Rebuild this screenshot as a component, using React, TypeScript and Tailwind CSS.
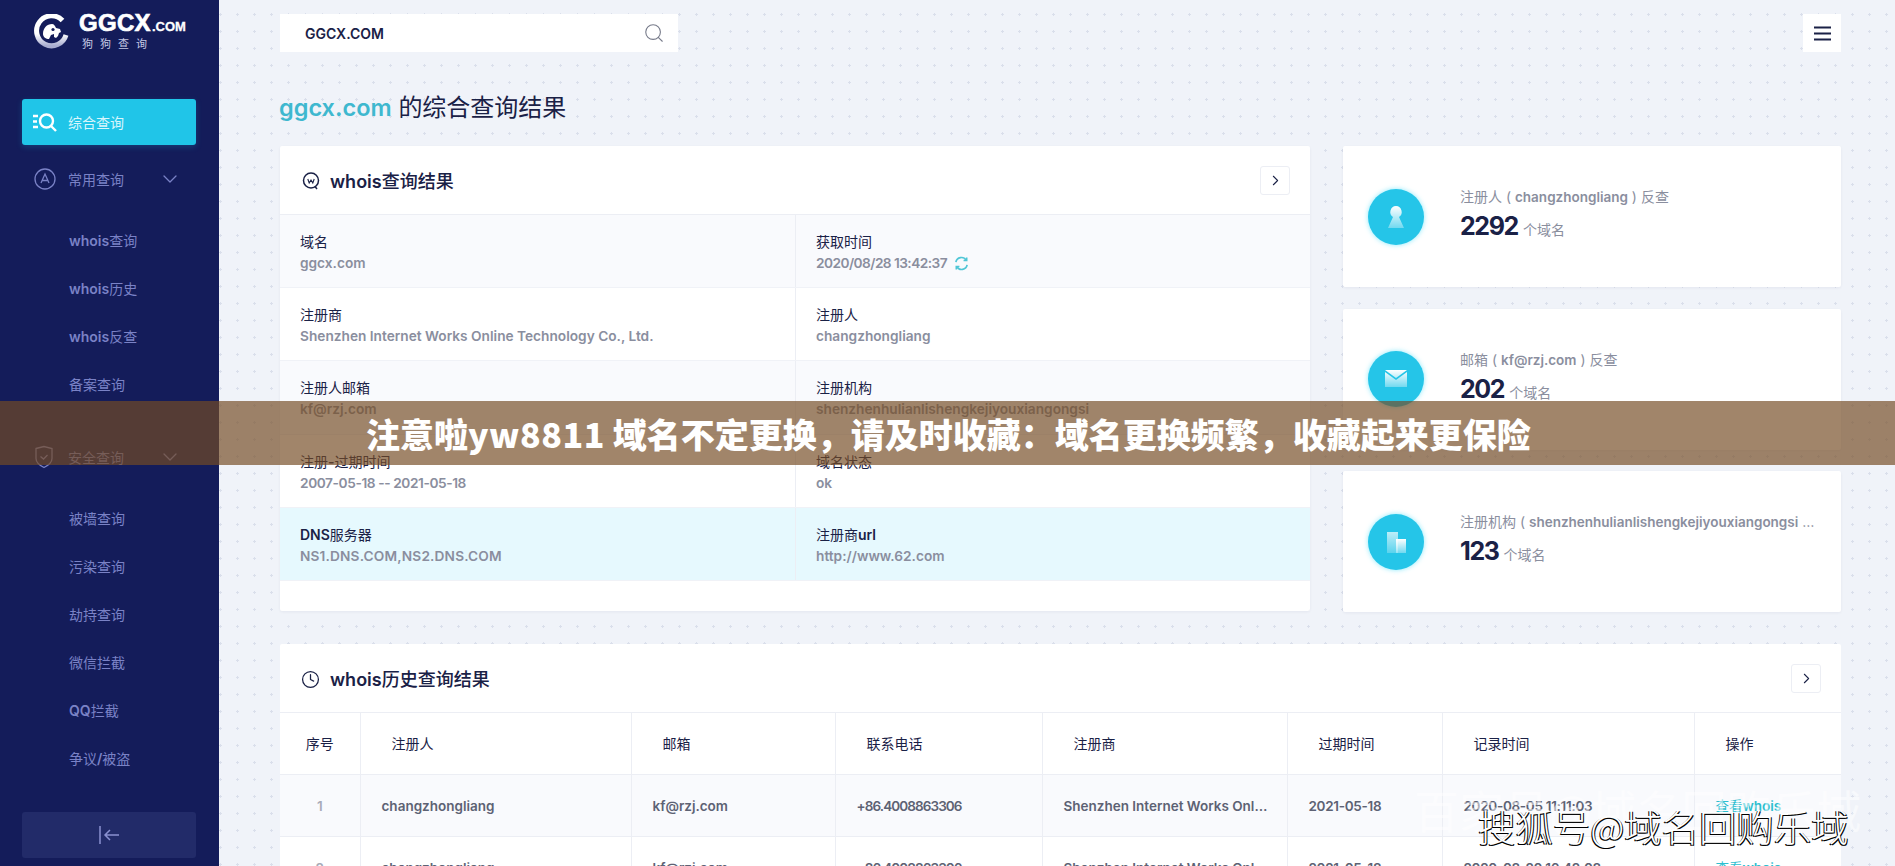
import { ChevronDown, ChevronRight, Clock, Search } from "lucide-react";

const font = "font-['Inter','Noto_Sans_CJK_SC',sans-serif]";

const navGroups = {
  common: ["whois查询", "whois历史", "whois反查", "备案查询"],
  security: ["被墙查询", "污染查询", "劫持查询", "微信拦截", "QQ拦截", "争议/被盗"],
};

const whoisRows = [
  {
    tone: "bg-[#f9fafd]",
    left: { label: "域名", value: "ggcx.com" },
    right: { label: "获取时间", value: "2020/08/28 13:42:37", tight: "tracking-[-0.55px]" },
  },
  {
    tone: "bg-white",
    left: { label: "注册商", value: "Shenzhen Internet Works Online Technology Co., Ltd." },
    right: { label: "注册人", value: "changzhongliang" },
  },
  {
    tone: "bg-[#f9fafd]",
    left: { label: "注册人邮箱", value: "kf@rzj.com" },
    right: { label: "注册机构", value: "shenzhenhulianlishengkejiyouxiangongsi" },
  },
  {
    tone: "bg-white",
    left: { label: "注册-过期时间", value: "2007-05-18 -- 2021-05-18", tight: "tracking-[-0.4px]" },
    right: { label: "域名状态", value: "ok" },
  },
  {
    tone: "bg-[#e6f9fe]",
    left: { label: "DNS服务器", value: "NS1.DNS.COM,NS2.DNS.COM", tight: "tracking-[0.15px]" },
    right: { label: "注册商url", value: "http://www.62.com" },
  },
];

const history = [
  { id: 1, time: "2020-08-05 11:11:03", tone: "bg-[#f9fafd]" },
  { id: 2, time: "2020-08-20 16:42:08", tone: "bg-white" },
];

// latin runs are bold on the original site, the chinese runs are not
function Mixed({ text, weight = "font-semibold" }: { text: string; weight?: string }) {
  return (
    <>
      {text.split(/([\x00-\x7f]+)/).map((part, i) =>
        i % 2 === 1 ? (
          <span key={i} className={weight}>
            {part}
          </span>
        ) : (
          part
        ),
      )}
    </>
  );
}

function Logo() {
  return (
    <div className="flex items-center pl-[33px] pt-[14px]">
      <svg width="36" height="36" viewBox="0 0 36 36" fill="none">
        <defs>
          <linearGradient id="logo-fill" x1="0" y1="0" x2="0" y2="1">
            <stop offset="0.6" stopColor="#ffffff" />
            <stop offset="1" stopColor="#a9add0" />
          </linearGradient>
        </defs>
        <path d="M29.500 6.500A15 15 0 1 0 33 21" stroke="url(#logo-fill)" strokeWidth="5" />
        <path
          d="M10 20c0-6 4-10 9-10 2 0 3 2 4 4l4 1 1 3-2 1-1 3-2 2-2-1v-3l-3 1-2 4c-3 0-6-2-6-5Z"
          fill="#ffffff"
        />
        <circle cx="20" cy="15.500" r="1.600" fill="#141c5a" />
      </svg>
      <div className="ml-[10px] mt-[-3px]">
        <div className="flex items-baseline font-['Liberation_Sans',sans-serif] font-bold leading-none text-white">
          <span className="text-[24px] tracking-[0.3px] [-webkit-text-stroke:0.7px_white]">GGCX</span>
          <span className="ml-[1px] text-[13px] [-webkit-text-stroke:0.3px_white]">.COM</span>
        </div>
        <div className={`mt-[3px] pl-[3px] text-[11px] leading-[12px] tracking-[7px] text-[#c5c9e4] ${font}`}>狗狗查询</div>
      </div>
    </div>
  );
}

function SubNav({ items }: { items: string[] }) {
  return (
    <div className="flex flex-col">
      {items.map((item) => (
        <div key={item} className="flex h-[48px] items-center whitespace-pre pl-[69px] text-[14px] text-[#7a82c6]">
          <span>
            <Mixed text={item} />
          </span>
        </div>
      ))}
    </div>
  );
}

function NavGroup({ label, icon }: { label: string; icon: React.ReactNode }) {
  return (
    <div className="flex h-[46px] items-center pl-[34px] pr-[37px] text-[14px] text-[#7a82c6]">
      <span className="flex w-[34px] shrink-0 items-center">{icon}</span>
      <span className="flex-1">{label}</span>
      <ChevronDown size={24} strokeWidth={1.300} />
    </div>
  );
}

function Sidebar() {
  return (
    <aside className={`relative flex w-[219px] shrink-0 flex-col overflow-hidden bg-[#141c5a] ${font}`}>
      <Logo />
      <div className="ml-[22px] mr-[23px] mt-[49px] flex h-[46px] items-center rounded-[3px] bg-[#20c5e8] pl-[11px] text-[14px] text-[#d9f6fc] shadow-[0_2px_6px_rgba(32,197,232,0.2)]">
        <svg width="25" height="20" viewBox="0 0 25 20" fill="none" stroke="white" strokeWidth="2.400" className="mr-[10px]">
          <path d="M0 4h5M0 9.500h4M0 15h5" />
          <circle cx="13.500" cy="9" r="6.500" />
          <path d="M18 14l5 5" />
        </svg>
        综合查询
      </div>
      <div className="mt-[11px]">
        <NavGroup
          label="常用查询"
          icon={
            <svg width="22" height="22" viewBox="0 0 22 22" fill="none" stroke="currentColor" strokeWidth="1.300">
              <circle cx="11" cy="11" r="10" />
              <path d="M7 15l4-9 4 9M8.500 12.500h5" />
            </svg>
          }
        />
      </div>
      <div className="mt-[14px]">
        <SubNav items={navGroups.common} />
      </div>
      <div className="mt-[26px]">
        <NavGroup
          label="安全查询"
          icon={
            <svg width="20" height="24" viewBox="0 0 20 24" fill="none" stroke="currentColor" strokeWidth="1.300">
              <path d="M2 3.500 10 1.500l8 2v10c0 4-4 7-8 9-4-2-8-5-8-9Z" />
              <path d="M6.500 11.500 9.500 14l4-4" />
            </svg>
          }
        />
      </div>
      <div className="mt-[14px]">
        <SubNav items={navGroups.security} />
      </div>
      <div className="ml-[22px] mr-[23px] mt-[30px] flex h-[46px] items-center justify-center rounded-[3px] bg-[#222b69] text-[#8a91d0]">
        <svg width="21" height="20" viewBox="0 0 21 20" fill="none" stroke="currentColor" strokeWidth="1.500">
          <path d="M1 1v18M20 10H6M11 5l-5 5 5 5" />
        </svg>
      </div>
    </aside>
  );
}

function CornerButton() {
  return (
    <button className="flex h-[29px] w-[30px] items-center justify-center rounded-[3px] border border-[#eceef4] bg-white text-[#1a2146]">
      <ChevronRight size={17} strokeWidth={1.500} />
    </button>
  );
}

function CardHeader({ icon, title }: { icon: React.ReactNode; title: string }) {
  return (
    <div className="flex h-[69px] items-center justify-between border-b border-[#eceef4] pl-[21px] pr-[20px]">
      <div className="flex items-center pt-[2px] text-[18px] font-medium text-[#1a2146]">
        <span className="mr-[10px] flex w-[19px] justify-center">{icon}</span>
        <span>
          <Mixed text={title} />
        </span>
      </div>
      <CornerButton />
    </div>
  );
}

function WhoisCell({
  label,
  value,
  tight,
  refresh,
}: {
  label: string;
  value: string;
  tight?: string;
  refresh?: boolean;
}) {
  return (
    <div className="flex-1 border-r border-[#eceef4] pl-[20px] pt-[17px] first:w-[516px] first:flex-none last:border-r-0">
      <div className="text-[14px] leading-[20px] text-[#1a2146]">
        <Mixed text={label} />
      </div>
      <div className={`mt-[1px] flex items-center text-[13.700px] font-semibold leading-[20px] text-[#8a8e9e] ${tight ?? ""}`}>
        {value}
        {refresh && (
          <svg width="15" height="15" viewBox="0 0 16 16" fill="none" stroke="#4fc6d6" strokeWidth="1.800" className="ml-[7px]">
            <path d="M2 6.500A6 6 0 0 1 13 4.500M14 9.500A6 6 0 0 1 3 11.500" />
            <path d="M13.500 1.500v3.300h-3.300M2.500 14.500v-3.300h3.300" />
          </svg>
        )}
      </div>
    </div>
  );
}

function WhoisCard() {
  return (
    <section className="h-[465px] w-[1030px] shrink-0 rounded-[2px] bg-white shadow-[0_1px_3px_rgba(30,40,90,0.06)]">
      <CardHeader
        title="whois查询结果"
        icon={
          <svg width="18" height="18" viewBox="0 0 18 18" fill="none" stroke="#1a2146" strokeWidth="1.500">
            <circle cx="9" cy="8.500" r="7.500" />
            <path d="M13 14.500l2 2.500" />
            <path d="M5.800 7l1.400 4 1.800-3 1.800 3 1.400-4" strokeWidth="1.100" />
          </svg>
        }
      />
      {whoisRows.map((row, i) => (
        <div key={row.left.label} className={`flex h-[73.200px] border-b border-[#f0f2f7] ${row.tone}`}>
          <WhoisCell {...row.left} />
          <WhoisCell {...row.right} refresh={i === 0} />
        </div>
      ))}
    </section>
  );
}

function StatCard({
  icon,
  label,
  name,
  count,
}: {
  icon: React.ReactNode;
  label: string;
  name: string;
  count: string;
}) {
  return (
    <div className="flex h-[141px] items-center rounded-[2px] bg-white pl-[25px] pr-[25px] shadow-[0_1px_3px_rgba(30,40,90,0.06)]">
      <div className="flex h-[56px] w-[56px] shrink-0 items-center justify-center rounded-full bg-[#25c5e8] shadow-[0_0_5px_rgba(60,220,250,0.6)]">
        {icon}
      </div>
      <div className="ml-[36px] min-w-0 flex-1 pb-[4px]">
        <div className="truncate text-[14px] leading-[20px] text-[#8a8e9e]">
          {label} ( <span className="text-[13.500px] font-semibold">{name}</span> ) 反查
        </div>
        <div className="mt-[3px] flex items-baseline text-[#8a8e9e]">
          <span className="text-[25px] font-bold leading-[32px] tracking-[-1.400px] text-[#1a2146]">{count}</span>
          <span className="ml-[5px] text-[14px]">个域名</span>
        </div>
      </div>
    </div>
  );
}

function StatIcon({ kind }: { kind: "user" | "mail" | "org" }) {
  const id = `stat-${kind}`;
  return (
    <svg width="24" height="28" viewBox="0 0 24 28">
      <defs>
        <linearGradient id={id} x1="0" y1="0" x2="0" y2="1">
          <stop offset="0" stopColor="#ffffff" />
          <stop offset="1" stopColor="#ffffff" stopOpacity="0.35" />
        </linearGradient>
      </defs>
      {kind === "user" && (
        <path d="M12 3a6 6 0 0 1 3 11l5 11H4l5-11a6 6 0 0 1 3-11Z" fill={`url(#${id})`} />
      )}
      {kind === "mail" && <path d="M1 7l11 8 11-8v15H1ZM1 5h22l-11 8Z" fill={`url(#${id})`} />}
      {kind === "org" && (
        <>
          <rect x="3" y="4" width="11" height="21" fill={`url(#${id})`} opacity="0.7" />
          <rect x="12" y="11" width="10" height="14" fill={`url(#${id})`} />
        </>
      )}
    </svg>
  );
}

const columns = [
  { name: "序号", width: "w-[80px]" },
  { name: "注册人", width: "w-[271px]" },
  { name: "邮箱", width: "w-[204px]" },
  { name: "联系电话", width: "w-[207px]" },
  { name: "注册商", width: "w-[245px]" },
  { name: "过期时间", width: "w-[155px]" },
  { name: "记录时间", width: "w-[252px]" },
  { name: "操作", width: "w-[147px]" },
];

function HistoryCard() {
  const td = "border-r border-[#eceef4] pl-[21px] pr-[17px] pt-[2px] last:border-r-0";
  return (
    <section className="mt-[32px] rounded-[2px] bg-white">
      <CardHeader title="whois历史查询结果" icon={<Clock size={19} strokeWidth={1.600} color="#1a2146" />} />
      <table className="w-full table-fixed border-collapse text-[13.500px]">
        <thead>
          <tr className="h-[61px] border-b border-[#eceef4]">
            {columns.map((col, i) => (
              <th
                key={col.name}
                className={`border-r border-[#eceef4] text-[14px] font-normal text-[#1a2146] last:border-r-0 ${col.width} ${i === 0 ? "text-center" : "pl-[31px] text-left"}`}
              >
                {col.name}
              </th>
            ))}
          </tr>
        </thead>
        <tbody>
          {history.map((row) => (
            <tr key={row.id} className={`h-[62px] border-b border-[#eceef4] font-semibold text-[#5d6274] ${row.tone}`}>
              <td className="border-r border-[#eceef4] pt-[2px] text-center text-[#a8abb8]">{row.id}</td>
              <td className={td}>changzhongliang</td>
              <td className={td}>kf@rzj.com</td>
              <td className={`${td} tracking-[-0.9px]`}>+86.4008863306</td>
              <td className={`${td} truncate`}>Shenzhen Internet Works Online Technology Co., Ltd.</td>
              <td className={`${td} tracking-[-0.3px]`}>2021-05-18</td>
              <td className={`${td} tracking-[-0.3px]`}>{row.time}</td>
              <td className={`${td} font-normal text-[#2dbecf]`}>
                <Mixed text="查看whois" />
              </td>
            </tr>
          ))}
        </tbody>
      </table>
    </section>
  );
}

function Main() {
  return (
    <main className={`h-full min-w-0 flex-1 overflow-hidden bg-[#f0f3f9] bg-[radial-gradient(#dadfeb_1px,transparent_1.200px)] bg-[size:17px_17px] bg-[position:-7px_6px] pl-[61px] pr-[54px] pt-[14px] ${font}`}>
      <div className="flex h-[38px] justify-between">
        <div className="flex w-[398px] items-center justify-between bg-white pl-[25px] pr-[13px]">
          <span className="text-[14px] font-semibold text-[#1a2146]">GGCX.COM</span>
          <Search size={22} strokeWidth={1.200} color="#777b8a" />
        </div>
        <button className="flex w-[38px] items-center justify-center bg-white">
          <svg width="17" height="15" viewBox="0 0 17 15" stroke="#1a2146" strokeWidth="1.800">
            <path d="M0 1.500h17M0 7.500h17M0 13.500h17" />
          </svg>
        </button>
      </div>
      <h1 className="mt-[38px] h-[36px] text-[24px] font-normal leading-[36px] text-[#1a2146]">
        <span className="ml-[-1px] text-[23.500px] font-semibold text-[#3fb8cf]">ggcx.com</span> 的综合查询结果
      </h1>
      <div className="mt-[20px] flex justify-between">
        <WhoisCard />
        <div className="flex w-[498px] flex-col gap-[21.500px]">
          <StatCard icon={<StatIcon kind="user" />} label="注册人" name="changzhongliang" count="2292" />
          <StatCard icon={<StatIcon kind="mail" />} label="邮箱" name="kf@rzj.com" count="202" />
          <StatCard icon={<StatIcon kind="org" />} label="注册机构" name="shenzhenhulianlishengkejiyouxiangongsi" count="123" />
        </div>
      </div>
      <HistoryCard />
    </main>
  );
}

export default function App() {
  return (
    <div className="relative flex h-[866px] w-[1895px] overflow-hidden">
      <Sidebar />
      <Main />
      {/* banner and watermarks pasted over the page */}
      <div className="absolute left-0 right-0 top-[401px] flex h-[64px] items-center bg-[rgba(116,75,36,0.68)] pl-[366px] font-['Noto_Sans_CJK_SC',sans-serif] text-[34px] font-black text-white">
        <span>
          注意啦<span className="tracking-[0.5px]">yw8811</span> 域名不定更换，请及时收藏：域名更换频繁，收藏起来更保险
        </span>
      </div>
      <div className="absolute left-[1414px] top-[785px] font-['Noto_Sans_CJK_SC',sans-serif] text-[45px] leading-[50px] text-white/50">
        百家号@域名回购乐域
      </div>
      <div className="absolute left-[1478px] top-[804px] font-['Noto_Sans_CJK_SC',sans-serif] text-[37.400px] font-light leading-[44px] text-white [text-shadow:-1px_1px_0_#000,1px_1px_0_#000]">
        搜狐号@域名回购乐域
      </div>
    </div>
  );
}
